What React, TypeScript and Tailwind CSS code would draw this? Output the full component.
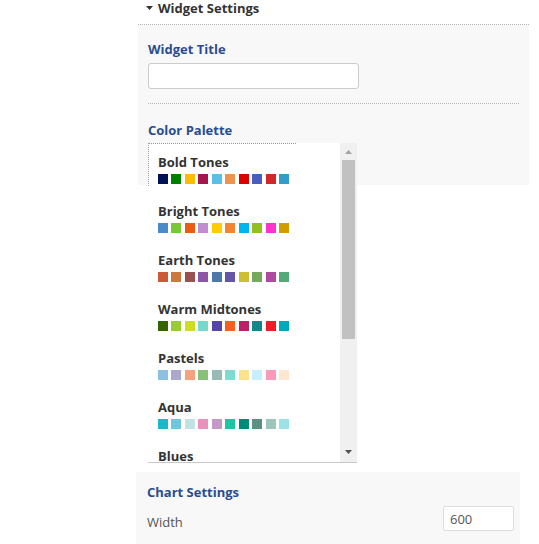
const palettes: { name: string; colors: string[] }[] = [
  {
    name: 'Bold Tones',
    colors: ['#001155', '#008000', '#ffbb00', '#a3174d', '#5bc0e8', '#ee9350', '#dd0000', '#4a5cbf', '#d32628', '#339dca'],
  },
  {
    name: 'Bright Tones',
    colors: ['#4a8ac8', '#77c832', '#ec5b12', '#c08ed0', '#ffcc00', '#f58430', '#00b4f0', '#92c020', '#ff33cc', '#d09c00'],
  },
  {
    name: 'Earth Tones',
    colors: ['#cc5a36', '#d0763f', '#9a5050', '#8c58a6', '#4f77aa', '#6656aa', '#ccbf33', '#76a95c', '#b04aa0', '#52aa78'],
  },
  {
    name: 'Warm Midtones',
    colors: ['#336600', '#99cc33', '#ccdd22', '#77d8cc', '#5544aa', '#f5601e', '#bb2066', '#15858a', '#ee1c25', '#00aabb'],
  },
  {
    name: 'Pastels',
    colors: ['#8cc0e0', '#aaa8cc', '#f9a07f', '#88c077', '#99bbb8', '#7ddcd0', '#fbe38a', '#c8eeff', '#fb9ab8', '#fde8cf'],
  },
  {
    name: 'Aqua',
    colors: ['#1ab8c8', '#6ec6dc', '#c2e0e6', '#ec90c0', '#c39ac4', '#1cc4a4', '#008a78', '#5e8f84', '#9ec4be', '#9ddfe6'],
  },
  {
    name: 'Blues',
    colors: ['#1f3a93', '#2c5aa0', '#3a7bd5', '#4a90e2', '#5dade2', '#85c1e9', '#aed6f1', '#1b4f72', '#2874a6', '#3498db'],
  },
]

function PaletteList() {
  return (
    <div className="absolute left-0 top-[4px] w-[209px] h-[320px] bg-white border-b border-[#c8c8c8] overflow-hidden flex">
      <div className="flex-1 relative overflow-hidden">
        <div className="absolute left-0 top-0 w-[148px] h-[43px] border-t border-l border-dotted border-[#999]" />
        {palettes.map((p) => (
          <div key={p.name} className="h-[49px] pl-[10px] pt-[10px]">
            <div className="text-[13px] leading-[18px] font-bold text-[#333]">{p.name}</div>
            <div className="mt-[3px] flex gap-[3.45px]">
              {p.colors.map((c, i) => (
                <span key={i} className="w-[10px] h-[10px]" style={{ backgroundColor: c }} />
              ))}
            </div>
          </div>
        ))}
      </div>
      <div className="w-[17px] h-full bg-[#f0f0f0] flex flex-col items-center">
        <div className="h-[17px] flex items-center justify-center">
          <svg width="7" height="4" viewBox="0 0 7 4">
            <path d="M0 4 L3.5 0 L7 4 Z" fill="#a3a3a3" />
          </svg>
        </div>
        <div className="w-[13px] h-[179px] bg-[#c1c1c1]" />
        <div className="flex-1" />
        <div className="h-[20px] flex items-center justify-center">
          <svg width="7" height="4" viewBox="0 0 7 4">
            <path d="M0 0 L7 0 L3.5 4 Z" fill="#505050" />
          </svg>
        </div>
      </div>
    </div>
  )
}

export default function App() {
  return (
    <div className="w-[539px] h-[544px] bg-white overflow-hidden font-['Open_Sans',sans-serif]">
      <div className="ml-[138px] w-[391px]">
        <div className="h-[24px] flex items-start pl-[8px] gap-[5px]">
          <svg width="7" height="16" viewBox="0 0 7 16" className="shrink-0">
            <path d="M0 6 L7 6 L3.5 10 Z" fill="#333" />
          </svg>
          <span className="text-[13px] leading-[16px] font-bold text-[#333]">Widget Settings</span>
        </div>

        <div className="h-[161px] bg-[#f8f8f8] border-t border-dotted border-[#b5b5b5] px-[10px] pt-[15px]">
          <div className="text-[13px] leading-[18px] font-bold text-[#2a4d8f]">Widget Title</div>
          <input
            type="text"
            className="mt-[5px] block w-[211px] h-[26px] bg-white border border-[#ccc] rounded-[3px] outline-none"
          />
          <div className="mt-[14px] border-t border-dotted border-[#b5b5b5]" />
          <div className="pt-[17px] text-[13px] leading-[18px] font-bold text-[#2a4d8f]">Color Palette</div>
          <div className="relative">
            <PaletteList />
          </div>
        </div>

        <div className="h-[287px]" />

        <div className="-ml-[2px] w-[384px] h-[72px] bg-[#f8f8f8] pl-[11px] pr-[6px] pt-[11px]">
          <div className="text-[13px] leading-[18px] font-bold text-[#2a4d8f]">Chart Settings</div>
          <div className="mt-[5px] flex items-start justify-between">
            <span className="mt-[7px] text-[13px] leading-[18px] text-[#555]">Width</span>
            <input
              type="text"
              defaultValue="600"
              className="w-[71px] h-[25px] bg-white border border-[#ddd] rounded-[2px] px-[6px] text-[13px] text-[#555] outline-none"
            />
          </div>
        </div>
      </div>
    </div>
  )
}
